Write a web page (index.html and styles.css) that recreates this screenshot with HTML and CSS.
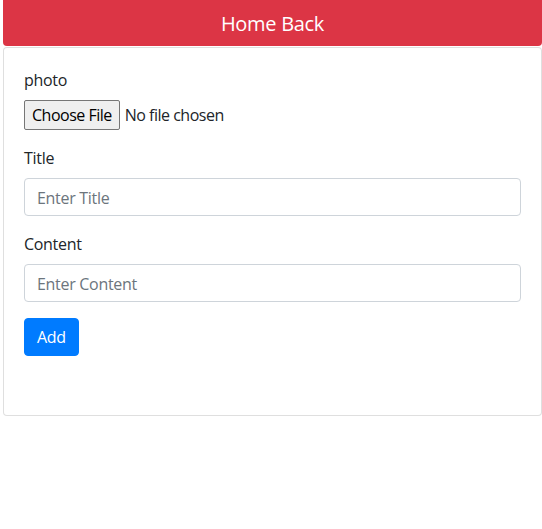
FILE: index.html
```html
<!DOCTYPE html>
<html lang="en">
<head>
<meta charset="utf-8">
<title>Add Post</title>
<link rel="stylesheet" href="styles.css">
</head>
<body>
<div class="page">
  <a class="btn-home" href="#">Home Back</a>
  <div class="card">
    <form class="card-body">
      <div class="form-group">
        <label class="label" for="photo">photo</label>
        <input class="file-input" id="photo" type="file">
      </div>
      <div class="form-group">
        <label class="label" for="title">Title</label>
        <input class="form-control" id="title" type="text" placeholder="Enter Title">
      </div>
      <div class="form-group">
        <label class="label" for="content">Content</label>
        <input class="form-control" id="content" type="text" placeholder="Enter Content">
      </div>
      <button class="btn-add" type="button">Add</button>
    </form>
  </div>
</div>
</body>
</html>
```
FILE: styles.css
```css
* { box-sizing: border-box; }
html, body { margin: 0; padding: 0; background: #fff; }
body {
  font-family: "Open Sans", "Noto Sans", "Liberation Sans", sans-serif;
  font-size: 16px;
  line-height: 1.5;
  color: #212529;
}
.page {
  padding: 0 0 0 3px;
  display: flex;
  flex-direction: column;
}
.btn-home {
  display: block;
  height: 46px;
  padding-top: 2px;
  line-height: 44px;
  background: #dc3545;
  color: #fff;
  text-align: center;
  font-size: 20px;
  text-decoration: none;
  border-radius: 0 0 4px 4px;
  margin-bottom: 1px;
  letter-spacing: -0.3px;
}
.card {
  border: 1px solid rgba(0,0,0,.125);
  border-radius: 4px;
  background: #fff;
}
.card-body {
  padding: 20px 20px 59px;
  margin: 0;
  display: flex;
  flex-direction: column;
  align-items: flex-start;
}
.form-group {
  display: flex;
  flex-direction: column;
  align-self: stretch;
  margin-bottom: 16px;
}
.label {
  display: block;
  margin-bottom: 8px;
  letter-spacing: -0.3px;
}
.file-input {
  height: 30px;
  font: inherit;
  font-size: 16px;
  color: #212529;
  letter-spacing: -0.5px;
}
.file-input::file-selector-button {
  font: inherit;
  letter-spacing: -0.5px;
  height: 30px;
  padding: 0 7px;
  margin-right: 5px;
  background: #efefef;
  border: 1px solid #767676;
  border-radius: 2px;
  color: #000;
}
.form-control {
  display: block;
  width: 100%;
  height: 38px;
  padding: 7px 12px 5px;
  font: inherit;
  color: #495057;
  background: #fff;
  border: 1px solid #ced4da;
  border-radius: 4px;
  letter-spacing: -0.3px;
}
.form-control::placeholder { color: #6c757d; opacity: 1; }
.btn-add {
  height: 38px;
  padding: 6px 12px;
  font: inherit;
  color: #fff;
  background: #007bff;
  border: 1px solid #007bff;
  border-radius: 4px;
  letter-spacing: -0.3px;
}
```
